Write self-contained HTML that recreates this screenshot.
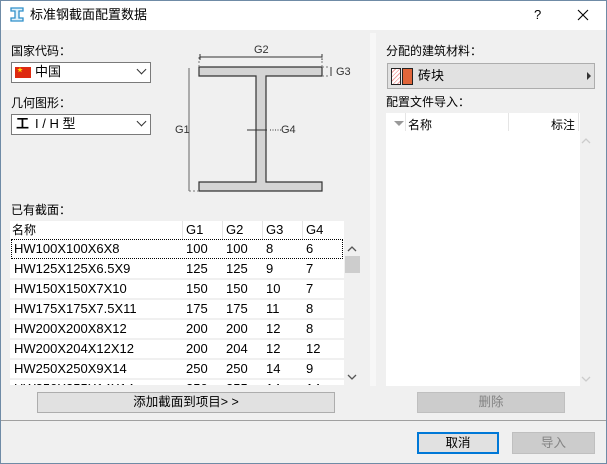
<!DOCTYPE html>
<html><head><meta charset="utf-8"><style>
*{box-sizing:border-box;margin:0;padding:0}
body{width:607px;height:464px;overflow:hidden;background:#f0f0f0;font-family:"Liberation Sans","Noto Sans CJK SC",sans-serif;font-size:12px;color:#000;position:relative}
.a{position:absolute}
.win{left:0;top:0;width:607px;height:464px;border:1px solid #6f8ba6}
.title{left:1px;top:1px;width:605px;height:29px;background:#fff}
.lbl{font-size:12px;line-height:14px}
.combo{background:#fff;border:1px solid #7a7a7a;height:21px}
.chev{width:7px;height:7px;border-right:1px solid #333;border-bottom:1px solid #333;transform:rotate(45deg)}
.tbl div{position:absolute;font-size:13px;line-height:20px;white-space:nowrap}
.btn{border:1px solid #adadad;background:#e1e1e1;text-align:center;line-height:19px;font-size:12.5px}
</style></head><body>
<div class="a win"></div>
<div class="a title"></div>
<svg class="a" style="left:10px;top:7px" width="14" height="15" viewBox="0 0 14 15"><path d="M1 1h12v3h-4v7h4v3H1v-3h4V4H1z" fill="#dff1fb" stroke="#2f8fc9" stroke-width="1.3"/></svg>
<div class="a" style="left:30px;top:7px;font-size:13px;line-height:16px">标准钢截面配置数据</div>
<div class="a" style="left:534px;top:7px;font-size:13px">?</div>
<svg class="a" style="left:577px;top:9px" width="12" height="12"><path d="M1 1L11 11M11 1L1 11" stroke="#000" stroke-width="1.1"/></svg>

<div class="a lbl" style="left:11px;top:44px">国家代码：</div>
<div class="a combo" style="left:11px;top:62px;width:140px"></div>
<div class="a" style="left:15px;top:67px;width:16px;height:11px;background:#de2910"></div>
<div class="a" style="left:17px;top:68px;color:#ffde00;font-size:6px;line-height:6px">★</div>
<div class="a" style="left:35px;top:64px;font-size:13px;line-height:16px">中国</div>
<div class="a chev" style="left:138px;top:66px"></div>
<div class="a lbl" style="left:11px;top:96px">几何图形：</div>
<div class="a combo" style="left:11px;top:114px;width:140px"></div>
<div class="a" style="left:16px;top:116px;font-size:13px;line-height:16px;font-weight:bold">工</div>
<div class="a" style="left:35px;top:116px;font-size:13px;line-height:16px">I / H 型</div>
<div class="a chev" style="left:138px;top:118px"></div>

<svg class="a" style="left:170px;top:40px" width="190" height="160">
<g fill="#d4d4d4" stroke="#333" stroke-width="1.2">
<path d="M29 27H152V36H96V142H152V151H29V142H86V36H29Z"/>
</g>
<g stroke="#333" fill="none" stroke-width="1">
<path d="M30 17H152" /><path d="M30 14v6M152 14v6"/>
<path d="M29 17v10M152 17v10M152 27h8M152 36h8" stroke-dasharray="2 2" stroke="#777"/>
<path d="M161 27v9"/>
<path d="M19 28V151" stroke="#666"/>
<path d="M19 151h10" stroke-dasharray="2 2" stroke="#777"/>
<path d="M77 90h20"/><path d="M100 90h12" stroke-dasharray="1 1.5"/>
</g>
<text x="84" y="13" font-size="11" fill="#333" font-family="Liberation Sans">G2</text>
<text x="166" y="35" font-size="11" fill="#333" font-family="Liberation Sans">G3</text>
<text x="5" y="93" font-size="11" fill="#333" font-family="Liberation Sans">G1</text>
<text x="111" y="93" font-size="11" fill="#333" font-family="Liberation Sans">G4</text>
</svg>

<div class="a lbl" style="left:11px;top:203px">已有截面：</div>
<div class="a" style="left:10px;top:221px;width:334px;height:164px;background:#fff;overflow:hidden">
<div class="a tbl" style="left:0;top:0;width:334px;height:164px">
<div style="left:2px;top:-1px;font-size:12px">名称</div><div style="left:176px;top:-1px">G1</div><div style="left:216px;top:-1px">G2</div><div style="left:256px;top:-1px">G3</div><div style="left:296px;top:-1px">G4</div>
<div style="left:172px;top:0;width:1px;height:18px;background:#e5e5e5"></div><div style="left:212px;top:0;width:1px;height:18px;background:#e5e5e5"></div><div style="left:252px;top:0;width:1px;height:18px;background:#e5e5e5"></div><div style="left:292px;top:0;width:1px;height:18px;background:#e5e5e5"></div>
<div style="left:1px;top:18px;width:332px;height:20px;border:1px dotted #000"></div>
<div style="left:4px;top:18px">HW100X100X6X8</div><div style="left:176px;top:18px">100</div><div style="left:216px;top:18px">100</div><div style="left:256px;top:18px">8</div><div style="left:296px;top:18px">6</div>
<div style="left:4px;top:38px">HW125X125X6.5X9</div><div style="left:176px;top:38px">125</div><div style="left:216px;top:38px">125</div><div style="left:256px;top:38px">9</div><div style="left:296px;top:38px">7</div>
<div style="left:4px;top:58px">HW150X150X7X10</div><div style="left:176px;top:58px">150</div><div style="left:216px;top:58px">150</div><div style="left:256px;top:58px">10</div><div style="left:296px;top:58px">7</div>
<div style="left:4px;top:78px">HW175X175X7.5X11</div><div style="left:176px;top:78px">175</div><div style="left:216px;top:78px">175</div><div style="left:256px;top:78px">11</div><div style="left:296px;top:78px">8</div>
<div style="left:4px;top:98px">HW200X200X8X12</div><div style="left:176px;top:98px">200</div><div style="left:216px;top:98px">200</div><div style="left:256px;top:98px">12</div><div style="left:296px;top:98px">8</div>
<div style="left:4px;top:118px">HW200X204X12X12</div><div style="left:176px;top:118px">200</div><div style="left:216px;top:118px">204</div><div style="left:256px;top:118px">12</div><div style="left:296px;top:118px">12</div>
<div style="left:4px;top:138px">HW250X250X9X14</div><div style="left:176px;top:138px">250</div><div style="left:216px;top:138px">250</div><div style="left:256px;top:138px">14</div><div style="left:296px;top:138px">9</div>
<div style="left:4px;top:158px">HW250X255X14X14</div><div style="left:176px;top:158px">250</div><div style="left:216px;top:158px">255</div><div style="left:256px;top:158px">14</div><div style="left:296px;top:158px">14</div>
<div style="left:0;top:57px;width:334px;height:2px;background:#f0f0f0"></div><div style="left:0;top:77px;width:334px;height:2px;background:#f0f0f0"></div><div style="left:0;top:97px;width:334px;height:2px;background:#f0f0f0"></div><div style="left:0;top:117px;width:334px;height:2px;background:#f0f0f0"></div><div style="left:0;top:137px;width:334px;height:2px;background:#f0f0f0"></div><div style="left:0;top:157px;width:334px;height:2px;background:#f0f0f0"></div>
</div></div>
<div class="a" style="left:344px;top:239px;width:16px;height:146px;background:#f0f0f0"></div>
<div class="a" style="left:345px;top:256px;width:15px;height:17px;background:#cdcdcd"></div>
<svg class="a" style="left:347px;top:245px" width="10" height="136"><path d="M1 6L5 2L9 6M1 130L5 134L9 130" stroke="#555" stroke-width="1.3" fill="none"/></svg>
<div class="a btn" style="left:37px;top:392px;width:298px;height:21px">添加截面到项目&gt; &gt;</div>

<div class="a" style="left:370px;top:33px;width:6px;height:353px;background:#f7f7f7"></div>
<div class="a lbl" style="left:386px;top:44px">分配的建筑材料：</div>
<div class="a" style="left:387px;top:63px;width:208px;height:26px;background:#e1e1e1;border:1px solid #adadad"></div>
<div class="a" style="left:391px;top:68px;width:10px;height:17px;border:1px solid #222;background:repeating-linear-gradient(135deg,#fff 0 2px,#f0a0a0 2px 3px)"></div>
<div class="a" style="left:402px;top:68px;width:11px;height:17px;border:1px solid #222;background:#e0653a"></div>
<div class="a" style="left:418px;top:68px;font-size:13px;line-height:16px">砖块</div>
<div class="a" style="left:587px;top:72px;width:0;height:0;border-left:4px solid #333;border-top:4px solid transparent;border-bottom:4px solid transparent"></div>
<div class="a lbl" style="left:386px;top:95px">配置文件导入：</div>
<div class="a" style="left:386px;top:113px;width:194px;height:273px;background:#fff"></div>
<div class="a" style="left:580px;top:131px;width:13px;height:255px;background:#f0f0f0"></div>
<div class="a" style="left:394px;top:121px;width:0;height:0;border-top:5px solid #999;border-left:5px solid transparent;border-right:5px solid transparent"></div>
<div class="a" style="left:405px;top:113px;width:1px;height:18px;background:#e5e5e5"></div>
<div class="a" style="left:508px;top:113px;width:1px;height:18px;background:#e5e5e5"></div>
<div class="a" style="left:578px;top:113px;width:1px;height:18px;background:#e5e5e5"></div>
<div class="a" style="left:408px;top:116px;font-size:12px">名称</div>
<div class="a" style="left:551px;top:116px;font-size:12px">标注</div>
<svg class="a" style="left:581px;top:137px" width="10" height="246"><path d="M1 6L5 2L9 6M1 240L5 244L9 240" stroke="#ccc" stroke-width="1.3" fill="none"/></svg>
<div class="a btn" style="left:417px;top:392px;width:148px;height:21px;background:#ccc;border-color:#bfbfbf;color:#838383">删除</div>

<div class="a" style="left:1px;top:420px;width:605px;height:1px;background:#a0a0a0"></div>
<div class="a btn" style="left:417px;top:432px;width:82px;height:22px;border:2px solid #0078d7;line-height:18px">取消</div>
<div class="a btn" style="left:512px;top:432px;width:83px;height:22px;background:#ccc;border-color:#bfbfbf;color:#838383;line-height:20px">导入</div>
</body></html>
